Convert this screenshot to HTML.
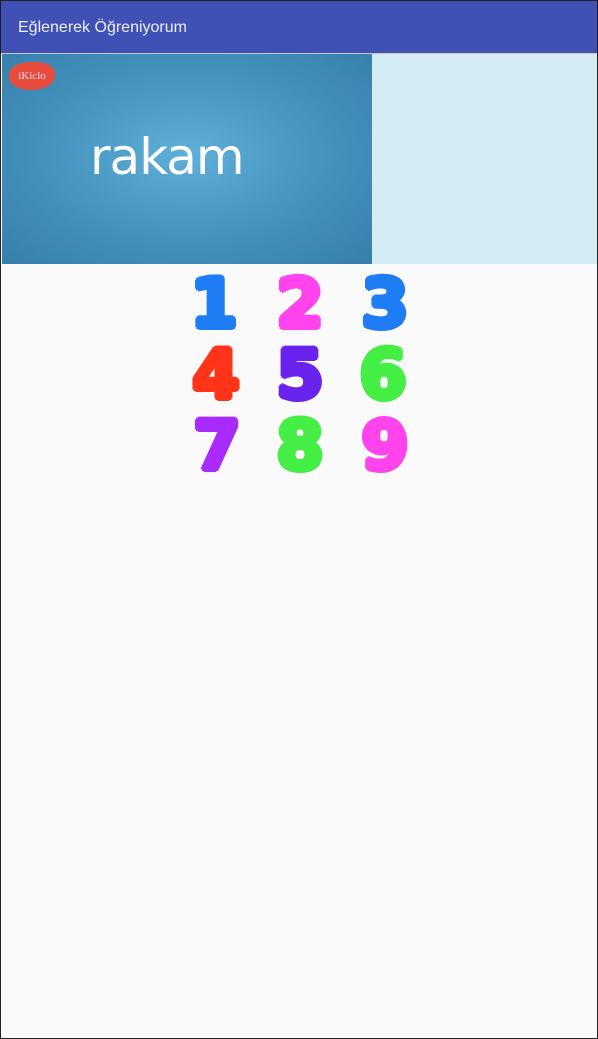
<!DOCTYPE html>
<html><head><style>
body{margin:0;width:598px;height:1039px;overflow:hidden;background:#fafafa;font-family:"Liberation Sans",sans-serif;}
.frame{position:absolute;left:0;top:0;width:596px;height:1037px;border:1px solid #222;}
.bar{position:absolute;left:1px;top:1px;width:596px;height:52px;background:#3f51b5;color:#eef;font-size:16px;line-height:54px;box-shadow:0 1px 2px rgba(0,0,0,.3)}
.bar span{margin-left:17px}
.img{position:absolute;left:2px;top:54px;width:370px;height:210px;background:radial-gradient(ellipse at 50% 48%,#5fb0d8 0%,#4896c2 45%,#367fab 100%);}
.right{position:absolute;left:372px;top:54px;width:225px;height:210px;background:#d4ecf3}
.rakam{position:absolute;left:90px;top:128px;color:#fff;font-size:50px;font-family:"DejaVu Sans",sans-serif;letter-spacing:-1px}
.logo{position:absolute;left:9px;top:62px;width:46px;height:28px;background:#e84c3d;border-radius:45% 40% 50% 45%;color:#fde;font-size:11px;font-family:"Liberation Serif",serif;text-align:center;line-height:28px}
.n{position:absolute;width:80px;text-align:center;font-weight:bold;font-size:68px;line-height:70px;font-family:"DejaVu Sans",sans-serif;text-shadow:3px 0 0 currentColor,-3px 0 0 currentColor,0 3px 0 currentColor,0 -3px 0 currentColor,2px 2px 0 currentColor,-2px -2px 0 currentColor,2px -2px 0 currentColor,-2px 2px 0 currentColor}
</style></head><body>
<div class="frame"></div>
<div class="bar"><span>Eğlenerek Öğreniyorum</span></div>
<div class="img"></div>
<div class="logo">iKiclo</div>
<div class="rakam">rakam</div>
<div class="right"></div>
<div class="n" style="left:174px;top:270px;color:#1e7cf5">1</div>
<div class="n" style="left:260px;top:270px;color:#ff44ee">2</div>
<div class="n" style="left:345px;top:270px;color:#1e7cf5">3</div>
<div class="n" style="left:176px;top:341px;color:#ff3418">4</div>
<div class="n" style="left:260px;top:341px;color:#6a22ee">5</div>
<div class="n" style="left:343px;top:341px;color:#44ee44">6</div>
<div class="n" style="left:177px;top:412px;color:#a92bff">7</div>
<div class="n" style="left:260px;top:412px;color:#44ee44">8</div>
<div class="n" style="left:345px;top:412px;color:#ff44ee">9</div>
</body></html>
